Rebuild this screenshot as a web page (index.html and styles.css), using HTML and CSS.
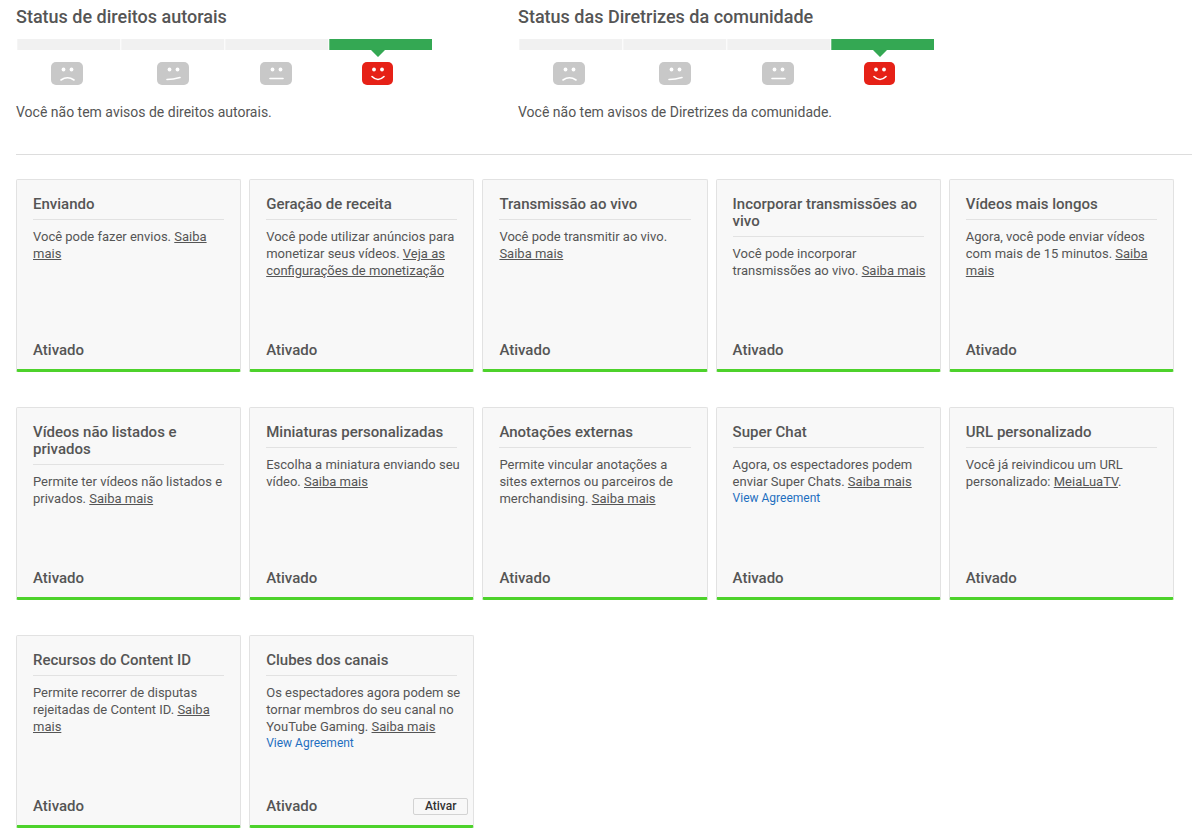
FILE: index.html
```html
<!DOCTYPE html>
<html lang="pt-BR">
<head>
    <meta charset="UTF-8">
    <title>Status e recursos</title>
    <link rel="stylesheet" href="styles.css">
</head>
<body>
<svg class="defs" aria-hidden="true">
    <symbol id="meter" viewBox="0 0 416 48">
        <path fill="#f1f1f1" d="M1.300 1h103v11h-103zM105.300 1h103v11h-103zM209.300 1h103v11h-103z"/>
        <path fill="#34a853" d="M313.300 1H416v11h-47l-7 7-7-7h-41.700z"/>
        <g fill="#c8c8c8">
            <rect x="35" y="24" width="32" height="23" rx="5"/>
            <rect x="141" y="24" width="32" height="23" rx="5"/>
            <rect x="244" y="24" width="32" height="23" rx="5"/>
        </g>
        <rect x="346" y="24" width="31" height="23" rx="5" fill="#e62117"/>
        <g fill="#fff">
            <circle cx="47.500" cy="31.500" r="1.900"/><circle cx="55.500" cy="31.500" r="1.900"/>
            <circle cx="153.500" cy="31.500" r="1.900"/><circle cx="161.500" cy="31.500" r="1.900"/>
            <circle cx="256.500" cy="31.500" r="1.900"/><circle cx="264.500" cy="31.500" r="1.900"/>
            <circle cx="358" cy="31.500" r="1.900"/><circle cx="366" cy="31.500" r="1.900"/>
        </g>
        <g fill="none" stroke="#fff" stroke-width="1.600" stroke-linecap="round">
            <path d="M45 42q6.500-4.500 13 0"/>
            <path d="M151 41.500q6 0 13-2"/>
            <path d="M254 40.500h13"/>
            <path d="M356 38.500q6 6 12 0"/>
        </g>
    </symbol>
</svg>
<div class="status">
    <div class="status-item">
        <h2>Status de direitos autorais</h2>
        <svg class="meter" role="img" aria-label="Bom"><use href="#meter"/></svg>
        <p>Você não tem avisos de direitos autorais.</p>
    </div>
    <div class="status-item">
        <h2>Status das Diretrizes da comunidade</h2>
        <svg class="meter" role="img" aria-label="Bom"><use href="#meter"/></svg>
        <p>Você não tem avisos de Diretrizes da comunidade.</p>
    </div>
</div>
<ul class="features">
    <li class="card">
        <h3>Enviando</h3>
        <p>Você pode fazer envios. <a href="#">Saiba mais</a></p>
        <div class="card-foot"><strong>Ativado</strong></div>
    </li>
    <li class="card">
        <h3>Geração de receita</h3>
        <p>Você pode utilizar anúncios para monetizar seus vídeos. <a href="#">Veja as configurações de monetização</a></p>
        <div class="card-foot"><strong>Ativado</strong></div>
    </li>
    <li class="card">
        <h3>Transmissão ao vivo</h3>
        <p>Você pode transmitir ao vivo. <a href="#">Saiba mais</a></p>
        <div class="card-foot"><strong>Ativado</strong></div>
    </li>
    <li class="card">
        <h3>Incorporar transmissões ao vivo</h3>
        <p>Você pode incorporar transmissões ao vivo. <a href="#">Saiba mais</a></p>
        <div class="card-foot"><strong>Ativado</strong></div>
    </li>
    <li class="card">
        <h3>Vídeos mais longos</h3>
        <p>Agora, você pode enviar vídeos com mais de 15 minutos. <a href="#">Saiba mais</a></p>
        <div class="card-foot"><strong>Ativado</strong></div>
    </li>
    <li class="card">
        <h3>Vídeos não listados e privados</h3>
        <p>Permite ter vídeos não listados e privados. <a href="#">Saiba mais</a></p>
        <div class="card-foot"><strong>Ativado</strong></div>
    </li>
    <li class="card">
        <h3>Miniaturas personalizadas</h3>
        <p>Escolha a miniatura enviando seu vídeo. <a href="#">Saiba mais</a></p>
        <div class="card-foot"><strong>Ativado</strong></div>
    </li>
    <li class="card">
        <h3>Anotações externas</h3>
        <p>Permite vincular anotações a sites externos ou parceiros de merchandising. <a href="#">Saiba mais</a></p>
        <div class="card-foot"><strong>Ativado</strong></div>
    </li>
    <li class="card">
        <h3>Super Chat</h3>
        <p>Agora, os espectadores podem enviar Super Chats. <a href="#">Saiba mais</a></p>
        <a class="agreement" href="#">View Agreement</a>
        <div class="card-foot"><strong>Ativado</strong></div>
    </li>
    <li class="card">
        <h3>URL personalizado</h3>
        <p>Você já reivindicou um URL personalizado: <a href="#">MeiaLuaTV</a>.</p>
        <div class="card-foot"><strong>Ativado</strong></div>
    </li>
    <li class="card">
        <h3>Recursos do Content ID</h3>
        <p>Permite recorrer de disputas rejeitadas de Content ID. <a href="#">Saiba mais</a></p>
        <div class="card-foot"><strong>Ativado</strong></div>
    </li>
    <li class="card">
        <h3>Clubes dos canais</h3>
        <p>Os espectadores agora podem se tornar membros do seu canal no YouTube Gaming. <a href="#">Saiba mais</a></p>
        <a class="agreement" href="#">View Agreement</a>
        <div class="card-foot"><strong>Ativado</strong><button type="button">Ativar</button></div>
    </li>
</ul>
</body>
</html>
```
FILE: styles.css
```css
* {
    margin: 0;
    padding: 0;
    box-sizing: border-box;
}
body {
    padding-left: 16px;
    background: #fff;
    color: #555;
    font-family: Roboto, "Liberation Sans", sans-serif;
    font-size: 13px;
    line-height: 17px;
}
ul {
    list-style: none;
}
h2,h3,strong {
    font-weight: 500;
}
.defs {
    display: block;
    width: 0;
    height: 0;
}

/* status */
.status {
    display: flex;
    padding: 6px 0 32px;
    border-bottom: 1px solid #ddd;
}
.status-item {
    flex: 0 1 502px;
}
.status h2 {
    font-size: 18px;
    line-height: 22px;
}
.meter {
    display: block;
    width: 416px;
    max-width: 100%;
    height: 48px;
    margin: 10px 0 16px;
}
.status p {
    font-size: 14px;
    line-height: 20px;
}

/* cards */
.features {
    display: grid;
    grid-template-columns: repeat(5, 1fr);
    gap: 35px 8px;
    padding: 24px 18px 12px 0;
}
.card {
    display: flex;
    flex-direction: column;
    align-items: flex-start;
    min-height: 193px;
    padding: 16px 10px 10px 16px;
    background: #f8f8f8;
    border: 1px solid #e2e2e2;
    border-bottom: 3px solid #4dd22b;
    border-radius: 2px;
}
.card h3 {
    align-self: stretch;
    padding-bottom: 6px;
    margin: 0 6px 8px 0;
    border-bottom: 1px solid #e2e2e2;
    font-size: 15px;
}
.card p a {
    color: inherit;
}
.card .agreement {
    color: #1f6fc0;
    font-size: 12px;
    line-height: 17px;
    text-decoration: none;
}
.card-foot {
    display: flex;
    align-self: stretch;
    align-items: center;
    justify-content: space-between;
    height: 17px;
    margin: auto -5px 0 0;
}
.card-foot strong {
    font-size: 15px;
}
.card-foot button {
    padding: 0 11px;
    background: #f8f8f8;
    border: 1px solid #d3d3d3;
    border-radius: 2px;
    color: #333;
    font: 500 12px/15px Roboto, "Liberation Sans", sans-serif;
}
```
